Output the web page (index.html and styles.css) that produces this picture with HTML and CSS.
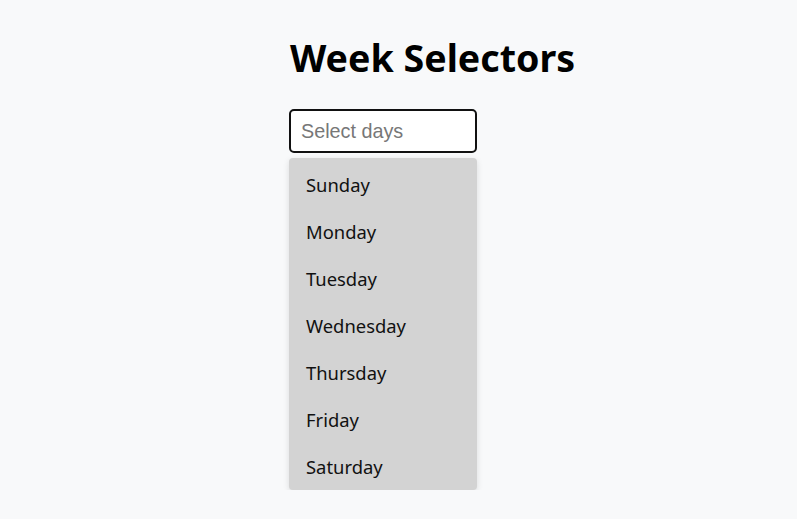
FILE: index.html
```html
<!DOCTYPE html>
<html>
<head>
<meta charset="utf-8">
<link rel="stylesheet" href="styles.css">
</head>
<body>
<main class="page">
  <h1 class="title">Week Selectors</h1>
  <div class="picker">
    <input class="field" type="text" placeholder="Select days">
    <ul class="menu">
      <li class="item">Sunday</li>
      <li class="item">Monday</li>
      <li class="item">Tuesday</li>
      <li class="item">Wednesday</li>
      <li class="item">Thursday</li>
      <li class="item">Friday</li>
      <li class="item">Saturday</li>
    </ul>
  </div>
</main>
</body>
</html>
```

FILE: styles.css
```css
html, body {
  margin: 0;
  padding: 0;
  background: #f8f9fa;
}
body {
  font-family: "Noto Sans", sans-serif;
  color: #111;
}
.page {
  padding: 33px 0 0 289px;
}
.title {
  margin: 0 0 0 1px;
  font-size: 37.6px;
  font-weight: 700;
  line-height: 50px;
  color: #000;
}
.picker {
  margin-top: 26px;
  width: 188px;
}
.field {
  box-sizing: border-box;
  display: block;
  width: 188px;
  height: 44px;
  margin: 0;
  padding: 0 10px;
  border: 2px solid #111;
  border-radius: 5px;
  background: #fff;
  font-family: "Liberation Sans", Arial, sans-serif;
  font-size: 19.8px;
  outline: none;
}
.field::placeholder {
  color: #777;
}
.menu {
  list-style: none;
  margin: 5px 0 0;
  padding: 3px 0 0;
  background: #d3d3d3;
  border-radius: 4px;
  box-shadow: 0 2px 6px rgba(0,0,0,0.12);
}
.item {
  height: 47px;
  line-height: 47px;
  padding-left: 17px;
  font-size: 18.4px;
  color: #111;
}
```
